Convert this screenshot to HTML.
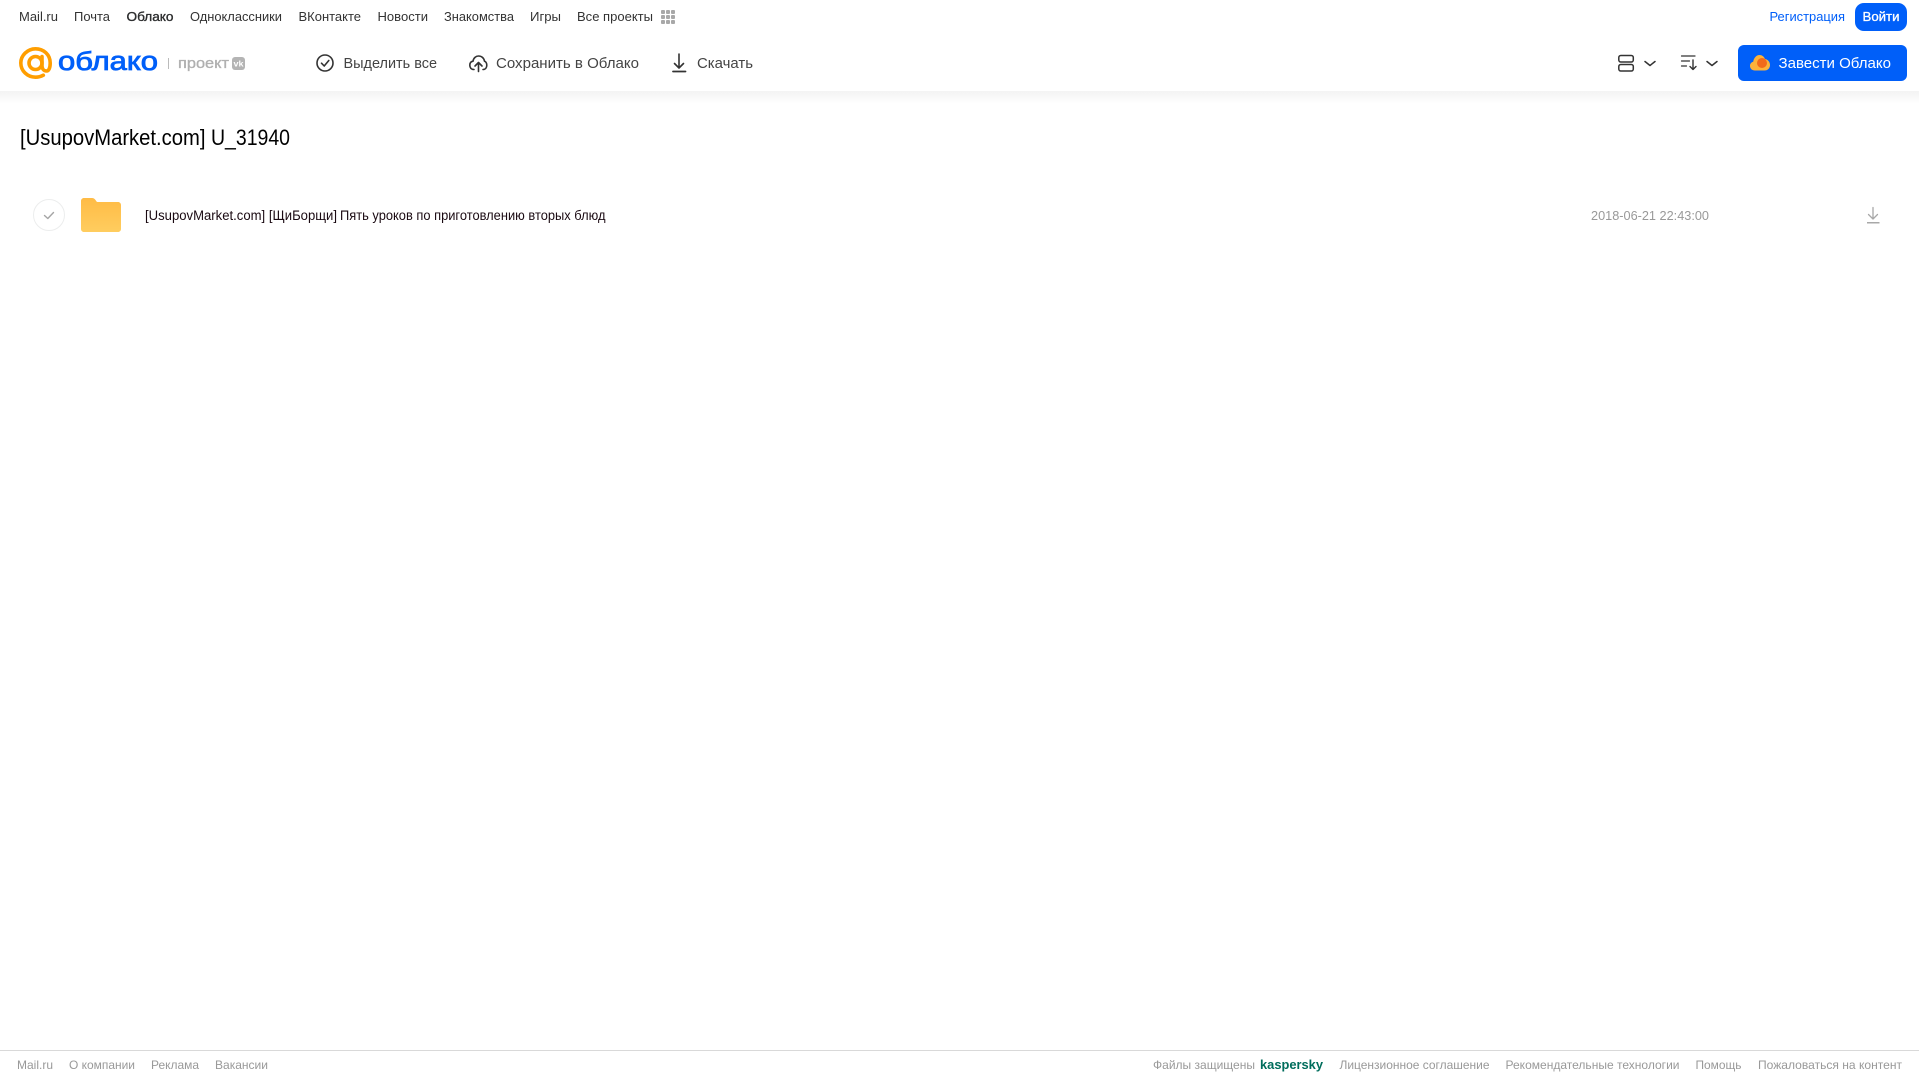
<!DOCTYPE html>
<html lang="ru">
<head>
<meta charset="utf-8">
<title>Облако</title>
<style>
html,body{margin:0;padding:0;background:#fff;width:1919px;height:1079px;overflow:hidden}
svg{display:block;position:absolute;left:0;top:0}
text{font-family:"Liberation Sans",Arial,sans-serif;white-space:pre}
.n{font-size:13px;fill:#333}
.a{font-size:15px;fill:#444}
.f{font-size:12px;fill:#999}
</style>
</head>
<body>
<svg width="1919" height="1079" viewBox="0 0 1919 1079" xmlns="http://www.w3.org/2000/svg">
<defs>
<linearGradient id="sh" x1="0" y1="0" x2="0" y2="1"><stop offset="0" stop-color="#f3f3f3"/><stop offset="1" stop-color="#fff"/></linearGradient>
<linearGradient id="fo" x1="0" y1="0" x2="0" y2="1"><stop offset="0" stop-color="#ffbb45"/><stop offset="1" stop-color="#ffcd5f"/></linearGradient>
</defs>
<rect x="0" y="91" width="1919" height="13" fill="url(#sh)"/>

<!-- top nav -->
<text class="n" x="19" y="21" textLength="39" lengthAdjust="spacingAndGlyphs">Mail.ru</text>
<text class="n" x="74" y="21" textLength="36" lengthAdjust="spacingAndGlyphs">Почта</text>
<text class="n" x="126.500" y="21" textLength="47" lengthAdjust="spacingAndGlyphs" stroke="#2c2d2e" stroke-width=".35" style="fill:#2c2d2e">Облако</text>
<text class="n" x="190" y="21" textLength="92" lengthAdjust="spacingAndGlyphs">Одноклассники</text>
<text class="n" x="298.500" y="21" textLength="62.500" lengthAdjust="spacingAndGlyphs">ВКонтакте</text>
<text class="n" x="377.500" y="21" textLength="50.500" lengthAdjust="spacingAndGlyphs">Новости</text>
<text class="n" x="444" y="21" textLength="70" lengthAdjust="spacingAndGlyphs">Знакомства</text>
<text class="n" x="530" y="21" textLength="31" lengthAdjust="spacingAndGlyphs">Игры</text>
<text class="n" x="577" y="21" textLength="76" lengthAdjust="spacingAndGlyphs">Все проекты</text>
<g fill="#a8a8a8">
<rect x="661" y="10" width="4" height="4" rx="1"/><rect x="666" y="10" width="4" height="4" rx="1"/><rect x="671" y="10" width="4" height="4" rx="1"/>
<rect x="661" y="15" width="4" height="4" rx="1"/><rect x="666" y="15" width="4" height="4" rx="1"/><rect x="671" y="15" width="4" height="4" rx="1"/>
<rect x="661" y="20" width="4" height="4" rx="1"/><rect x="666" y="20" width="4" height="4" rx="1"/><rect x="671" y="20" width="4" height="4" rx="1"/>
</g>
<text class="n" x="1769.500" y="21" textLength="75.500" lengthAdjust="spacingAndGlyphs" style="fill:#005ff9">Регистрация</text>
<rect x="1855" y="3" width="52" height="28" rx="9" fill="#005ff9"/>
<text x="1862.500" y="21" font-size="13" fill="#fff" stroke="#fff" stroke-width=".3" textLength="37" lengthAdjust="spacingAndGlyphs">Войти</text>

<!-- logo -->
<g fill="none" stroke="#ff9e00" stroke-width="3.600" stroke-linecap="round">
<circle cx="35.500" cy="63" r="6.500"/>
<path d="M42 56.500V65.500C42 69 44 71 46.500 71C49 71 50.200 67.500 50.200 63C50.200 54.500 43.500 48.800 35.500 48.800C27.500 48.800 20.800 55.500 20.800 63C20.800 71 27.500 77.200 35.500 77.200C38.500 77.200 41 76.500 43.300 75.200"/>
</g>
<text x="58" y="70" font-size="25.500" fill="#005ff9" stroke="#005ff9" stroke-width=".8" textLength="100" lengthAdjust="spacingAndGlyphs">облако</text>
<rect x="168" y="58" width="1" height="11" fill="#bbb"/>
<text x="178" y="68" font-size="15" fill="#b0b0b0" stroke="#b0b0b0" stroke-width=".35" textLength="51" lengthAdjust="spacingAndGlyphs">проект</text>
<rect x="232" y="57" width="13" height="13" rx="3" fill="#b4b4b4"/>
<text x="233.500" y="66.500" font-size="8" font-weight="700" fill="#fff" textLength="10" lengthAdjust="spacingAndGlyphs">vk</text>

<!-- actions -->
<g fill="none" stroke="#333" stroke-width="1.600" stroke-linecap="round" stroke-linejoin="round">
<circle cx="325" cy="63" r="8"/>
<path d="M321.500 63.200L324.200 66L328.800 60.500"/>
<path d="M474 69.500C471 69.500 469.800 67.500 469.800 65.300C469.800 63 471 61.500 473 61.200C473.500 58 476 56 478.500 56C481.500 56 484 58 484.500 61.200C486 61.700 486.800 63.300 486.800 65.300C486.800 67.500 485.500 69.500 483 69.500"/>
<path d="M478.500 71.500V63M475 66L478.500 62.500L482 66"/>
<path d="M679 54V68M674.500 63.500L679 68L683.500 63.500"/>
<path d="M673 71.500H685.500" stroke-width="1.800"/>
</g>
<text class="a" x="343.500" y="68" textLength="93.500" lengthAdjust="spacingAndGlyphs">Выделить все</text>
<text class="a" x="496" y="68" textLength="143" lengthAdjust="spacingAndGlyphs">Сохранить в Облако</text>
<text class="a" x="697" y="68" textLength="56" lengthAdjust="spacingAndGlyphs">Скачать</text>

<!-- right tools -->
<g fill="none" stroke="#333" stroke-width="1.500" stroke-linecap="round" stroke-linejoin="round">
<rect x="1618.800" y="55.500" width="14.500" height="6.500" rx="2"/>
<rect x="1618.800" y="64.500" width="14.500" height="6.500" rx="2"/>
<path d="M1645 61.500L1650 65.500L1655 61.500"/>
<path d="M1707 61.500L1712 65.500L1717 61.500"/>
<path d="M1681.500 56H1695M1681.500 61H1689.500M1681.500 66H1686.500" stroke-width="1.200"/>
<path d="M1693 60V69M1690 66.500L1693 69.500L1696 66.500" stroke-width="1.400"/>
</g>
<rect x="1738" y="45" width="169" height="36" rx="6" fill="#005ff9"/>
<path d="M1755 70.500C1752 70.500 1750 68.500 1750 66C1750 63.800 1751.300 62.300 1753.200 61.800C1753.800 58 1756.300 55 1759.500 55C1762 55 1764 56.500 1765 59C1768 59.500 1770 62 1770 65C1770 68 1768 70.500 1764.500 70.500Z" fill="#fdb23a"/>
<circle cx="1762" cy="63" r="5" fill="#f26a1b"/>
<text x="1778.500" y="68" font-size="15" fill="#fff" textLength="112.500" lengthAdjust="spacingAndGlyphs">Завести Облако</text>

<!-- title -->
<text x="20" y="145" font-size="22" fill="#000" textLength="185.500" lengthAdjust="spacingAndGlyphs">[UsupovMarket.com]</text>
<text x="211" y="145" font-size="22" fill="#000" textLength="79" lengthAdjust="spacingAndGlyphs">U_31940</text>

<!-- row -->
<circle cx="49" cy="215" r="15.500" fill="#fff" stroke="#eceded"/>
<path d="M44.500 215.500L47.800 218.500L53.500 212.500" fill="none" stroke="#a5a5a5" stroke-width="1.400" stroke-linecap="round" stroke-linejoin="round"/>
<path d="M81 201C81 199.300 82.300 198 84 198H92C93.500 198 94.500 198.700 95.500 200L96.500 201.500C97 202 97.500 202 98.500 202H118C119.700 202 121 203.300 121 205V229C121 230.700 119.700 232 118 232H84C82.300 232 81 230.700 81 229Z" fill="url(#fo)"/>
<text x="145" y="220" font-size="13.500" fill="#1a0a12" textLength="192" lengthAdjust="spacingAndGlyphs">[UsupovMarket.com] [ЩиБорщи]</text>
<text x="340" y="220" font-size="13.500" fill="#1a0a12" textLength="265.500" lengthAdjust="spacingAndGlyphs">Пять уроков по приготовлению вторых блюд</text>
<text x="1591" y="220" font-size="13" fill="#999" textLength="118" lengthAdjust="spacingAndGlyphs">2018-06-21 22:43:00</text>
<path d="M1873 207.500V219M1868.500 214.500L1873 219L1877.500 214.500" fill="none" stroke="#a8a8a8" stroke-width="1.300" stroke-linecap="round" stroke-linejoin="round"/>
<rect x="1867" y="222" width="12.500" height="1.500" fill="#a8a8a8"/>

<!-- footer -->
<rect x="0" y="1050" width="1919" height="1" fill="#d9d9d9"/>
<text class="f" x="17" y="1069" textLength="36" lengthAdjust="spacingAndGlyphs">Mail.ru</text>
<text class="f" x="69" y="1069" textLength="66" lengthAdjust="spacingAndGlyphs">О компании</text>
<text class="f" x="151" y="1069" textLength="48" lengthAdjust="spacingAndGlyphs">Реклама</text>
<text class="f" x="215" y="1069" textLength="53" lengthAdjust="spacingAndGlyphs">Вакансии</text>
<text class="f" x="1153" y="1069" textLength="102" lengthAdjust="spacingAndGlyphs">Файлы защищены</text>
<text x="1260" y="1069" font-size="13" font-weight="700" fill="#006d5c" textLength="63" lengthAdjust="spacingAndGlyphs">kaspersky</text>
<text class="f" x="1339.500" y="1069" textLength="150" lengthAdjust="spacingAndGlyphs">Лицензионное соглашение</text>
<text class="f" x="1505.500" y="1069" textLength="174" lengthAdjust="spacingAndGlyphs">Рекомендательные технологии</text>
<text class="f" x="1695.500" y="1069" textLength="46" lengthAdjust="spacingAndGlyphs">Помощь</text>
<text class="f" x="1758" y="1069" textLength="144" lengthAdjust="spacingAndGlyphs">Пожаловаться на контент</text>
</svg>
</body>
</html>
